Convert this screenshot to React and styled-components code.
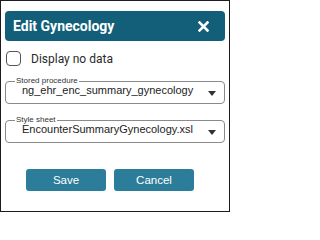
import React, { useState } from 'react';
import styled, { createGlobalStyle } from 'styled-components';

const GlobalStyle = createGlobalStyle`
  html, body {
    margin: 0;
    padding: 0;
    background: #fff;
  }
  body {
    font-family: Roboto, "Liberation Sans", Arial, sans-serif;
  }
`;

const Dialog = styled.div`
  box-sizing: border-box;
  width: 230px;
  height: 212px;
  border: 1.5px solid #1c1c1c;
  padding: 10px 4px 0 4px;
  display: flex;
  flex-direction: column;
`;

const Header = styled.div`
  height: 30px;
  border-radius: 4px;
  background: #135f79;
  display: flex;
  align-items: center;
  justify-content: space-between;
  padding: 0 16px 0 8px;
`;

const Title = styled.h1`
  margin: 0;
  font-family: Roboto, sans-serif;
  font-size: 14px;
  font-weight: 700;
  color: #fff;
`;

const CloseButton = styled.button`
  border: 0;
  background: none;
  padding: 0;
  display: flex;
  cursor: pointer;
`;

const CheckRow = styled.label`
  display: flex;
  align-items: center;
  gap: 10px;
  margin: 10px 0 0 1px;
  font-family: Roboto, sans-serif;
  font-size: 12px;
  color: #2a2a2a;
`;

const Box = styled.span`
  box-sizing: border-box;
  width: 15px;
  height: 15px;
  border: 1.5px solid #555;
  border-radius: 4px;
  background: ${(p) => (p.$checked ? '#135f79' : '#fff')};
`;

const Field = styled.div`
  position: relative;
  box-sizing: border-box;
  height: 23px;
  margin-top: ${(p) => p.$top}px;
  padding: 1px 8px 0 16px;
  border: 1px solid #8a8a8a;
  border-radius: 4px;
  display: flex;
  align-items: flex-start;
`;

const Legend = styled.span`
  position: absolute;
  left: 9px;
  top: -6px;
  padding: 0 1px;
  background: #fff;
  font-family: "Liberation Sans", Arial, sans-serif;
  font-size: 8px;
  line-height: 10px;
  color: #333;
`;

const Value = styled.span`
  flex: 1;
  font-family: "Liberation Sans", Arial, sans-serif;
  font-size: 11px;
  line-height: 14px;
  color: #222;
  white-space: nowrap;
`;

const Caret = styled.span`
  align-self: center;
  width: 0;
  height: 0;
  border-left: 4.5px solid transparent;
  border-right: 4.5px solid transparent;
  border-top: 5px solid #333;
`;

const Actions = styled.div`
  display: flex;
  gap: 8px;
  margin: 26px 0 0 21px;
`;

const Button = styled.button`
  width: 80px;
  height: 22px;
  border: 0;
  border-radius: 3px;
  background: #2c7d9a;
  color: #fff;
  font-family: "Liberation Sans", Arial, sans-serif;
  font-size: 11.5px;
  padding: 0;
  cursor: pointer;
`;

export default function App() {
  const [checked, setChecked] = useState(false);
  return (
    <>
      <GlobalStyle />
      <Dialog>
        <Header>
          <Title>Edit Gynecology</Title>
          <CloseButton aria-label="Close">
            <svg width="11" height="11" viewBox="0 0 11 11">
              <path d="M1.5 1.5 L9.5 9.5 M9.5 1.5 L1.5 9.5" stroke="#fff" strokeWidth="2.6" strokeLinecap="square" />
            </svg>
          </CloseButton>
        </Header>
        <CheckRow onClick={() => setChecked(!checked)}>
          <Box $checked={checked} />
          Display no data
        </CheckRow>
        <Field $top={15}>
          <Legend>Stored procedure</Legend>
          <Value>ng_ehr_enc_summary_gynecology</Value>
          <Caret />
        </Field>
        <Field $top={16}>
          <Legend>Style sheet</Legend>
          <Value>EncounterSummaryGynecology.xsl</Value>
          <Caret />
        </Field>
        <Actions>
          <Button>Save</Button>
          <Button>Cancel</Button>
        </Actions>
      </Dialog>
    </>
  );
}
